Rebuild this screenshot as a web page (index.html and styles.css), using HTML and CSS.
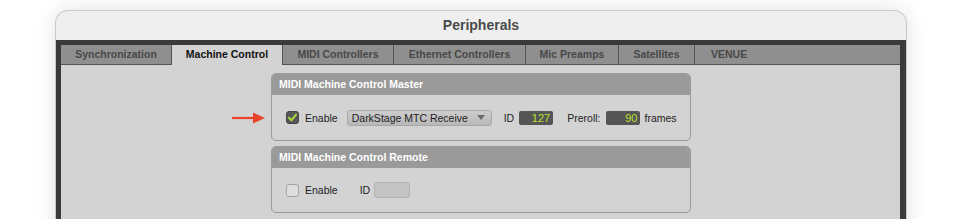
FILE: index.html
```html
<!DOCTYPE html>
<html>
<head>
<meta charset="utf-8">
<link rel="stylesheet" href="styles.css">
</head>
<body>
<div class="window">
  <div class="titlebar">Peripherals</div>
  <div class="frame">
    <div class="tabs">
      <div class="tab w111">Synchronization</div>
      <div class="tab w111 active">Machine Control</div>
      <div class="tab w111">MIDI Controllers</div>
      <div class="tab w132">Ethernet Controllers</div>
      <div class="tab w93">Mic Preamps</div>
      <div class="tab w76">Satellites</div>
      <div class="tab last">VENUE</div>
    </div>
    <div class="content">
      <svg class="arrow" width="36" height="14" viewBox="0 0 36 14">
        <path d="M1 7 H24" stroke="#e8432b" stroke-width="2.2" fill="none"/>
        <path d="M22 1.5 L34 7 L22 12.5 Z" fill="#e8432b"/>
      </svg>
      <div class="group">
        <div class="group-head">MIDI Machine Control Master</div>
        <div class="group-body">
          <span class="check on">
            <svg width="11" height="11" viewBox="0 0 11 11"><path d="M2 5.8 L4.4 8.3 L9 2.6" stroke="#a6dc3c" stroke-width="2" fill="none" stroke-linecap="round" stroke-linejoin="round"/></svg>
          </span>
          <span class="label">Enable</span>
          <span class="select">DarkStage MTC Receive<span class="caret"></span></span>
          <span class="label id">ID</span>
          <span class="num">127</span>
          <span class="label preroll">Preroll:</span>
          <span class="num n2">90</span>
          <span class="label frames">frames</span>
        </div>
      </div>
      <div class="group g2">
        <div class="group-head">MIDI Machine Control Remote</div>
        <div class="group-body b2">
          <span class="check"></span>
          <span class="label">Enable</span>
          <span class="label id2">ID</span>
          <span class="field"></span>
        </div>
      </div>
    </div>
  </div>
</div>
</body>
</html>
```
FILE: styles.css
```css
html, body {
  margin: 0;
  padding: 0;
  background: #ffffff;
  overflow: hidden;
  font-family: "Liberation Sans", Arial, sans-serif;
}
.window {
  margin: 11px 0 0 56px;
  width: 850px;
  height: 240px;
  background: #efefef;
  border-radius: 12px 12px 0 0;
  box-shadow: 0 0 22px rgba(0,0,0,0.13), 0 0 0 1px #d6d6d6;
}
.titlebar {
  height: 29px;
  line-height: 29px;
  text-align: center;
  font-weight: bold;
  font-size: 14px;
  color: #4a4a4a;
}
.frame {
  background: #3a3a3a;
  padding: 5px 6px 0 5px;
  height: 206px;
}
.tabs {
  display: flex;
  height: 19px;
  background: #8f8f8f;
  border-bottom: 1px solid #555;
}
.tab {
  box-sizing: border-box;
  height: 19px;
  line-height: 19px;
  font-size: 10.5px;
  font-weight: bold;
  color: #484848;
  text-align: center;
  border-right: 1px solid #555;
}
.tab.active {
  background: #d3d3d3;
  color: #111;
  height: 20px;
}
.tab.last {
  border-right: none;
  text-align: left;
  padding-left: 16px;
  flex: 1;
}
.w111 { width: 111px; }
.w132 { width: 132px; }
.w93 { width: 93px; }
.w76 { width: 76px; }
.content {
  position: relative;
  background: #d3d3d3;
  height: 186px;
  padding-top: 8px;
  box-sizing: border-box;
}
.arrow {
  position: absolute;
  left: 170px;
  top: 46px;
}
.group {
  margin-left: 210px;
  width: 420px;
  box-sizing: border-box;
  border: 1px solid #9a9a9a;
  border-radius: 5px;
  overflow: hidden;
}
.g2 { margin-top: 5px; }
.group-head {
  height: 21px;
  line-height: 21px;
  background: #9a9a9a;
  color: #fff;
  font-weight: bold;
  font-size: 10.5px;
  padding-left: 7px;
}
.group-body {
  height: 45px;
  display: flex;
  align-items: center;
  padding-left: 14px;
  font-size: 10.5px;
  color: #222;
}
.b2 { height: 44px; }
.check {
  box-sizing: border-box;
  width: 13px;
  height: 13px;
  border-radius: 3px;
  border: 1px solid #a5a5a5;
  background: #dedede;
  display: flex;
  align-items: center;
  justify-content: center;
}
.check.on {
  background: #585858;
  border-color: #444;
}
.label { margin-left: 6px; }
.select {
  position: relative;
  box-sizing: border-box;
  margin-left: 9px;
  width: 145px;
  height: 16px;
  line-height: 14px;
  padding-left: 4px;
  border: 1px solid #a8a8a8;
  border-radius: 3px;
  background: linear-gradient(#cdcdcd, #b8b8b8);
  color: #222;
}
.caret {
  position: absolute;
  right: 6px;
  top: 4px;
  width: 0;
  height: 0;
  border-left: 4px solid transparent;
  border-right: 4px solid transparent;
  border-top: 5px solid #6a6a6a;
}
.id { margin-left: 12px; }
.num {
  box-sizing: border-box;
  margin-left: 5px;
  width: 34px;
  height: 14px;
  line-height: 14px;
  background: #555;
  border-radius: 2px;
  color: #b9e22c;
  text-align: right;
  padding-right: 3px;
  font-size: 11px;
}
.preroll { margin-left: 14px; }
.n2 { margin-left: 6px; }
.frames { margin-left: 4px; }
.id2 { margin-left: 22px; }
.field {
  box-sizing: border-box;
  margin-left: 4px;
  width: 36px;
  height: 16px;
  background: #c4c4c4;
  border: 1px solid #b2b2b2;
  border-radius: 3px;
}
```
